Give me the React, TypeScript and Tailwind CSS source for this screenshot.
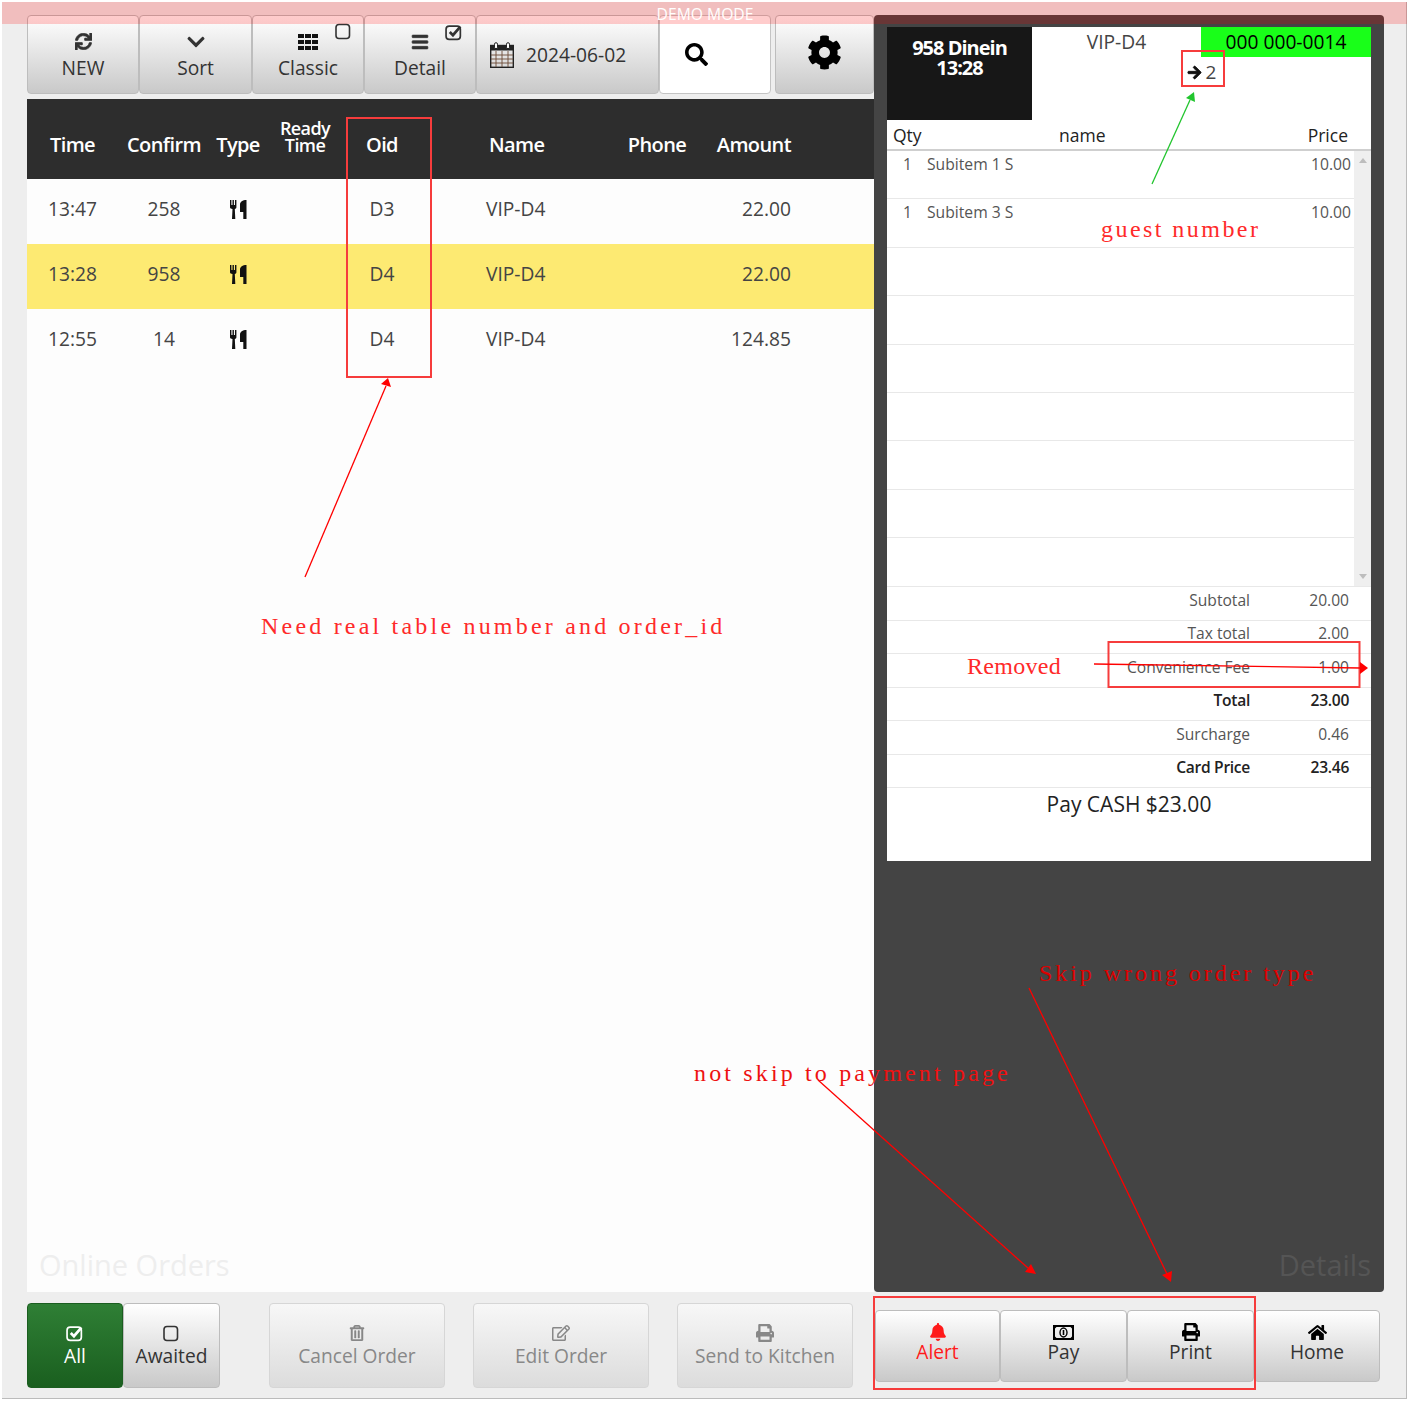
import React from 'react';
import {
  FaSync,
  FaChevronDown,
  FaBars,
  FaSearch,
  FaCog,
  FaArrowRight,
  FaRegTrashAlt,
  FaRegEdit,
  FaPrint,
  FaBell,
  FaHome,
} from 'react-icons/fa';

const toolBtn =
  'relative flex flex-col items-center justify-center rounded border border-[#bdbdbd] bg-gradient-to-b from-white to-[#c9c9c9] text-[#333]';
const offBtn =
  'flex flex-col items-center justify-center w-[176px] pt-[2px] rounded border border-[#d6d6d6] bg-gradient-to-b from-[#f7f7f7] to-[#dcdcdc] text-[#888]';
const iconBox = 'flex items-center justify-center h-[18px]';

const Cutlery = () => (
  <svg width="17" height="19" viewBox="0 0 17 19" fill="#111">
    <path d="M0 0h1.4v5h1.1V0h1.4v5H5V0h1.4v7.2c0 1-.8 1.6-1.6 1.8l.5 10H2l.5-10C1 8.8 0 8.2 0 7.2z" />
    <path d="M16.5 0v19h-3.2v-7H10V4.5C10 2 12.5 0 16.5 0z" />
  </svg>
);

const Grid3 = () => (
  <svg width="20" height="16" viewBox="0 0 20 16" fill="#111">
    <path d="M0 0h6v4H0zM7 0h6v4H7zM14 0h6v4h-6zM0 6h6v4H0zM7 6h6v4H7zM14 6h6v4h-6zM0 12h6v4H0zM7 12h6v4H7zM14 12h6v4h-6z" />
  </svg>
);

const BoxIcon = ({ checked, size = 17 }: { checked?: boolean; size?: number }) => (
  <svg width={size} height={size} viewBox="0 0 17 17" fill="none" stroke="currentColor">
    <rect x="1" y={checked ? 3 : 1.5} width="13.5" height={checked ? 12.5 : 14} rx="3" strokeWidth="1.6" />
    {checked && <path d="M4.5 8.5l3 3 7-8" strokeWidth="2.6" />}
  </svg>
);

const CalendarIcon = () => (
  <svg width="24" height="26" viewBox="0 0 24 26" fill="none">
    <rect x="0.7" y="3.5" width="22.6" height="21.8" stroke="#222" strokeWidth="1.4" />
    <rect x="0.7" y="3.5" width="22.6" height="5" fill="#222" />
    <path d="M1 13h22M1 17h22M1 21h22M6 9v16M12 9v16M18 9v16" stroke="#6b4a35" strokeWidth="0.9" />
    <rect x="4.5" y="0.7" width="3" height="6" rx="1.5" fill="#fff" stroke="#222" />
    <rect x="16.5" y="0.7" width="3" height="6" rx="1.5" fill="#fff" stroke="#222" />
  </svg>
);

const MoneyIcon = () => (
  <svg width="21" height="15" viewBox="0 0 21 15">
    <path fillRule="evenodd" d="M0 0h21v15H0zM3.5 2L2 3.5v8L3.5 13h14l1.5-1.5v-8L17.500 2z" fill="#000" />
    <ellipse cx="10.500" cy="7.500" rx="3.500" ry="4.500" fill="none" stroke="#000" strokeWidth="1.4" />
    <path d="M10.500 5v5" stroke="#000" strokeWidth="1.6" />
  </svg>
);

const orders = [
  { time: '13:47', confirm: '258', oid: 'D3', name: 'VIP-D4', amount: '22.00' },
  { time: '13:28', confirm: '958', oid: 'D4', name: 'VIP-D4', amount: '22.00', active: true },
  { time: '12:55', confirm: '14', oid: 'D4', name: 'VIP-D4', amount: '124.85' },
];

const items: { qty?: string; name?: string; price?: string }[] = [
  { qty: '1', name: 'Subitem 1 S', price: '10.00' },
  { qty: '1', name: 'Subitem 3 S', price: '10.00' },
  {},
  {},
  {},
  {},
  {},
  {},
  {},
];

const totals = [
  { label: 'Subtotal', value: '20.00' },
  { label: 'Tax total', value: '2.00' },
  { label: 'Convenience Fee', value: '1.00' },
  { label: 'Total', value: '23.00', strong: true },
  { label: 'Surcharge', value: '0.46' },
  { label: 'Card Price', value: '23.46', strong: true },
];

const cols = 'grid grid-cols-[91px_92px_56px_78px_76px_180px_114px_77px_83px]';

const Annotations = () => (
  <svg className="absolute left-0 top-0 z-20 pointer-events-none" width="1408" height="1401" fill="none">
    <g stroke="#f63c3c" strokeWidth="2">
      <rect x="347" y="118" width="84" height="259" />
      <rect x="1182" y="51" width="42" height="35" />
      <rect x="1108.500" y="642" width="251" height="45" />
      <rect x="874" y="1297" width="381" height="92" />
    </g>
    <g stroke="#f00" strokeWidth="1.3">
      <line x1="305" y1="577" x2="386" y2="386" />
      <line x1="1094" y1="664" x2="1360" y2="668" />
      <line x1="818" y1="1080" x2="1028" y2="1268" />
      <line x1="1029" y1="988" x2="1167" y2="1274" />
    </g>
    <line x1="1152" y1="184" x2="1190" y2="100" stroke="#22c52e" strokeWidth="1.3" />
    <g fill="#f00">
      <polygon points="388,378 391,387 381,384" />
      <polygon points="1368,668 1360,662 1360,674" />
      <polygon points="1036,1274 1025,1272 1031,1264" />
      <polygon points="1171,1282 1162,1275 1172,1271" />
    </g>
    <polygon points="1194,92 1195,102 1186,98" fill="#22c52e" />
  </svg>
);

const Note = ({ className, children }: { className: string; children: React.ReactNode }) => (
  <div className={`absolute z-20 whitespace-pre font-['Liberation_Serif',serif] text-[24px] leading-[26px] ${className}`}>
    {children}
  </div>
);

export default function App() {
  return (
    <div className="relative w-[1408px] h-[1401px] bg-white pl-[2px] pt-[2px] font-['Open_Sans',sans-serif]">
      <div className="flex w-[1405px] h-[1397px] bg-[#eeeeee] pl-[25px] pt-[13px] border-r border-b border-[#bbb]">
        {/* orders side */}
        <div className="flex flex-col w-[847px]">
          <div className="flex h-[79px] text-[19.2px] leading-[26px]">
            <button className={`${toolBtn} w-[112px] pt-[4px]`}>
              <span className={iconBox}><FaSync size={17} strokeWidth={20} /></span>
              <span className="mt-[4px]">NEW</span>
            </button>
            <button className={`${toolBtn} w-[113px] pt-[4px]`}>
              <span className={iconBox}><FaChevronDown size={20} /></span>
              <span className="mt-[4px]">Sort</span>
            </button>
            <button className={`${toolBtn} w-[112px] pt-[4px]`}>
              <span className={iconBox}><Grid3 /></span>
              <span className="mt-[4px]">Classic</span>
              <span className="absolute right-[11px] top-[7px]"><BoxIcon /></span>
            </button>
            <button className={`${toolBtn} w-[112px] pt-[4px]`}>
              <span className={iconBox}><FaBars size={18} strokeWidth={20} /></span>
              <span className="mt-[4px]">Detail</span>
              <span className="absolute right-[12px] top-[7px]"><BoxIcon checked size={18} /></span>
            </button>
            <button className={`${toolBtn} w-[183px] !flex-row !justify-start pl-[13px] gap-[12px]`}>
              <CalendarIcon />
              <span>2024-06-02</span>
            </button>
            <div className="flex items-center w-[112px] rounded border border-[#c4c4c4] bg-white pl-[25px]">
              <FaSearch size={23} className="text-black" />
            </div>
            <button className={`${toolBtn} w-[99px] ml-[4px] !justify-start pt-[19px]`}>
              <FaCog size={35} className="text-black" />
            </button>
          </div>

          <div className="flex flex-col flex-1 mt-[5px] bg-[#fdfdfd] rounded-t-[2px]">
            <div className={`${cols} h-[80px] items-center pt-[12px] bg-[#2d2d2d] text-white text-[20px] font-semibold tracking-[-0.6px] text-center`}>
              <div>Time</div>
              <div>Confirm</div>
              <div>Type</div>
              <div className="text-[18px] leading-[17px] -mt-[17px]">
                Ready
                <br />
                Time
              </div>
              <div>Oid</div>
              <div className="text-left pl-[69px]">Name</div>
              <div>Phone</div>
              <div className="text-right whitespace-nowrap">Amount</div>
              <div />
            </div>
            {orders.map((o) => (
              <div
                key={o.time}
                className={`${cols} h-[65px] items-center pb-[5px] text-[19.2px] text-[#444] text-center ${o.active ? 'bg-[#fdea72]' : ''}`}
              >
                <div>{o.time}</div>
                <div>{o.confirm}</div>
                <div className="flex justify-center">
                  <Cutlery />
                </div>
                <div />
                <div>{o.oid}</div>
                <div className="text-left pl-[66px]">{o.name}</div>
                <div />
                <div className="text-right">{o.amount}</div>
                <div />
              </div>
            ))}
            <div className="mt-auto pl-[12px] pb-[7px] text-[29px] leading-[40px] text-[#eeeeee]">Online Orders</div>
          </div>

          <div className="flex mt-[11px] mb-[10px] h-[85px] text-[19.2px] leading-[26px]">
            <button className="flex flex-col items-center justify-center w-[96px] pt-[2px] rounded border border-[#1b5e20] bg-gradient-to-b from-[#2f7f35] to-[#1a5f1f] text-white">
              <span className={iconBox}><BoxIcon checked size={18} /></span>
              <span className="mt-[1px]">All</span>
            </button>
            <button className={`${toolBtn} w-[97px] pt-[2px]`}>
              <span className={iconBox}><BoxIcon size={17} /></span>
              <span className="mt-[1px]">Awaited</span>
            </button>
            <button className={`${offBtn} ml-[49px]`}>
              <span className={iconBox}><FaRegTrashAlt size={16} strokeWidth={15} /></span>
              <span className="mt-[1px]">Cancel Order</span>
            </button>
            <button className={`${offBtn} ml-[28px]`}>
              <span className={iconBox}><FaRegEdit size={18} /></span>
              <span className="mt-[1px]">Edit Order</span>
            </button>
            <button className={`${offBtn} ml-[28px]`}>
              <span className={iconBox}><FaPrint size={18} /></span>
              <span className="mt-[1px]">Send to Kitchen</span>
            </button>
          </div>
        </div>

        {/* details side */}
        <div className="flex flex-col w-[510px]">
          <div className="flex flex-col h-[1277px] rounded-[4px] bg-[#444444] px-[13px] pt-[12px]">
            <div className="flex flex-col h-[834px] bg-white">
              <div className="flex h-[93px]">
                <div className="w-[145px] bg-[#171717] pt-[11px] text-center text-white text-[20px] leading-[20px] font-bold tracking-[-1px]">
                  958 Dinein
                  <br />
                  13:28
                </div>
                <div className="flex flex-col flex-1">
                  <div className="flex h-[30px] text-[19.2px] leading-[30px]">
                    <div className="w-[169px] text-center text-[#444]">VIP-D4</div>
                    <div className="flex-1 bg-[#19ff19] text-center text-black">000 000-0014</div>
                  </div>
                  <div className="flex items-center justify-center gap-[4px] mt-[2px] text-[19px] leading-[26px] text-[#444]">
                    <FaArrowRight size={15} strokeWidth={30} className="text-[#111]" />
                    <span>2</span>
                  </div>
                </div>
              </div>
              <div className="flex items-center h-[31px] pt-[2px] border-b-2 border-[#cfcfcf] pl-[6px] pr-[23px] text-[17.5px] text-[#222]">
                <span className="w-[166px]">Qty</span>
                <span>name</span>
                <span className="ml-auto">Price</span>
              </div>
              <div className="flex h-[435px]">
                <div className="flex-1">
                  {items.map((it, i) => (
                    <div key={i} className="flex h-[48.4px] pt-[2px] border-b border-[#e8e8e8] text-[15.7px] leading-[22px] text-[#555]">
                      <span className="w-[40px] pl-[16px]">{it.qty}</span>
                      <span className="flex-1">{it.name}</span>
                      <span className="pr-[3px]">{it.price}</span>
                    </div>
                  ))}
                </div>
                <div className="flex flex-col items-center justify-between w-[17px] bg-[#efefef] py-[7px]">
                  <div className="w-0 h-0 border-x-[4px] border-x-transparent border-b-[5px] border-b-[#bdbdbd]" />
                  <div className="w-0 h-0 border-x-[4px] border-x-transparent border-t-[5px] border-t-[#bdbdbd]" />
                </div>
              </div>
              {totals.map((t) => (
                <div
                  key={t.label}
                  className={`flex justify-end items-center h-[33.5px] border-t border-[#e8e8e8] pr-[22px] pb-[6px] text-[15.6px] ${t.strong ? 'text-[#222] font-semibold tracking-[-0.3px]' : 'text-[#555]'}`}
                >
                  <span>{t.label}</span>
                  <span className="w-[99px] text-right">{t.value}</span>
                </div>
              ))}
              <div className="border-t border-[#e8e8e8] text-center text-[21px] leading-[32px] text-[#222]">Pay CASH $23.00</div>
            </div>
            <div className="mt-auto pb-[7px] text-right text-[29px] leading-[40px] text-[#555555]">Details</div>
          </div>
          <div className="flex ml-[1px] mt-[18px] h-[72px] text-[19.2px] leading-[22px]">
            <button className={`${toolBtn} w-[125px] pb-[6px] !text-[#ff1a1a]`}>
              <span className={iconBox}><FaBell size={18} /></span>
              <span>Alert</span>
            </button>
            <button className={`${toolBtn} w-[127px] pb-[6px]`}>
              <span className={iconBox}><MoneyIcon /></span>
              <span>Pay</span>
            </button>
            <button className={`${toolBtn} w-[127px] pb-[6px]`}>
              <span className={iconBox}><FaPrint size={18} className="text-black" /></span>
              <span>Print</span>
            </button>
            <button className={`${toolBtn} w-[126px] pb-[6px]`}>
              <span className={iconBox}><FaHome size={19} className="text-black" /></span>
              <span>Home</span>
            </button>
          </div>
        </div>
      </div>

      {/* demo banner lies over the toolbar */}
      <div className="absolute left-[2px] top-[2px] z-10 w-[1405px] h-[22px] pl-[1px] bg-[#ff0000]/20 text-center text-white text-[15.7px] leading-[24px]">
        DEMO MODE
      </div>

      <Annotations />
      <Note className="left-[261px] top-[613px] tracking-[3.2px] text-[#ff2a2a]">Need real table number and order_id</Note>
      <Note className="left-[1101px] top-[216px] tracking-[2.45px] text-[#ff2a2a]">guest number</Note>
      <Note className="left-[967px] top-[653px] tracking-[0.3px] text-[#ff2a2a]">Removed</Note>
      <Note className="left-[1039px] top-[960px] tracking-[2.95px] text-[#dd0000]">Skip wrong order type</Note>
      <Note className="left-[694px] top-[1060px] tracking-[3.15px] text-[#ee1111]">not skip to payment page</Note>
    </div>
  );
}
